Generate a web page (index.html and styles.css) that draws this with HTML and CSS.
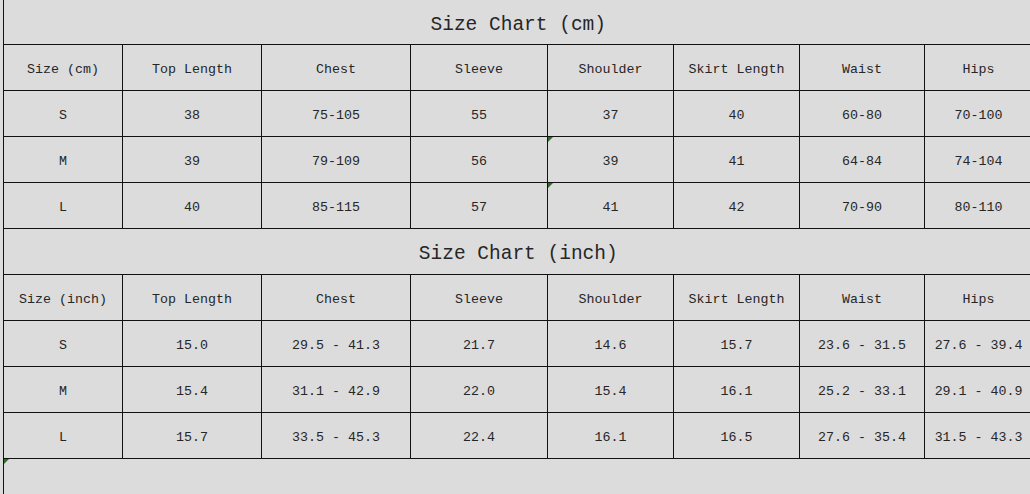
FILE: index.html
```html
<!DOCTYPE html>
<html>
<head>
<meta charset="utf-8">
<link rel="stylesheet" href="styles.css">
</head>
<body>
<table class="chart">
  <colgroup>
    <col class="c1"><col class="c2"><col class="c3"><col class="c4"><col class="c5"><col class="c6"><col class="c7"><col class="c8">
  </colgroup>
  <tr class="title-row"><td colspan="8" class="title first-title">Size Chart (cm)</td></tr>
  <tr><td>Size (cm)</td><td>Top Length</td><td>Chest</td><td>Sleeve</td><td>Shoulder</td><td>Skirt Length</td><td>Waist</td><td>Hips</td></tr>
  <tr><td>S</td><td>38</td><td>75-105</td><td>55</td><td>37</td><td>40</td><td>60-80</td><td>70-100</td></tr>
  <tr><td>M</td><td>39</td><td>79-109</td><td>56</td><td class="mark">39</td><td>41</td><td>64-84</td><td>74-104</td></tr>
  <tr><td>L</td><td>40</td><td>85-115</td><td>57</td><td class="mark">41</td><td>42</td><td>70-90</td><td>80-110</td></tr>
  <tr class="title-row"><td colspan="8" class="title">Size Chart (inch)</td></tr>
  <tr><td>Size (inch)</td><td>Top Length</td><td>Chest</td><td>Sleeve</td><td>Shoulder</td><td>Skirt Length</td><td>Waist</td><td>Hips</td></tr>
  <tr><td>S</td><td>15.0</td><td>29.5 - 41.3</td><td>21.7</td><td>14.6</td><td>15.7</td><td>23.6 - 31.5</td><td>27.6 - 39.4</td></tr>
  <tr><td>M</td><td>15.4</td><td>31.1 - 42.9</td><td>22.0</td><td>15.4</td><td>16.1</td><td>25.2 - 33.1</td><td>29.1 - 40.9</td></tr>
  <tr><td>L</td><td>15.7</td><td>33.5 - 45.3</td><td>22.4</td><td>16.1</td><td>16.5</td><td>27.6 - 35.4</td><td>31.5 - 43.3</td></tr>
  <tr class="tail-row"><td colspan="8" class="tail mark"></td></tr>
</table>
</body>
</html>
```

FILE: styles.css
```css
html, body {
  margin: 0;
  padding: 0;
  background: #dcdcdc;
  overflow: hidden;
  width: 1030px;
  height: 494px;
}

.chart {
  border-collapse: collapse;
  table-layout: fixed;
  width: 1029px;
  margin-left: 3px;
  font-family: "Liberation Mono", "DejaVu Sans Mono", monospace;
  font-size: 13.3px;
  color: #262626;
}

.c1 { width: 119px; }
.c2 { width: 139px; }
.c3 { width: 149px; }
.c4 { width: 137px; }
.c5 { width: 126px; }
.c6 { width: 126px; }
.c7 { width: 125px; }
.c8 { width: 108px; }

.chart td {
  border: 1px solid #111;
  height: 46px;
  padding: 6px 0 0 0;
  box-sizing: border-box;
  text-align: center;
  vertical-align: middle;
  white-space: nowrap;
  position: relative;
  line-height: 16px;
}

.chart td.title {
  font-size: 19.5px;
  border-right: none;
  padding-top: 6px;
  height: 46px;
}

.chart td.first-title {
  border-top: none;
  height: 44px;
}

.chart td.tail {
  border-right: none;
  border-bottom: none;
  height: 60px;
}

.mark::before {
  content: "";
  position: absolute;
  left: 0;
  top: 0;
  width: 0;
  height: 0;
  border-top: 5px solid #2f6e2f;
  border-right: 5px solid transparent;
}
```
